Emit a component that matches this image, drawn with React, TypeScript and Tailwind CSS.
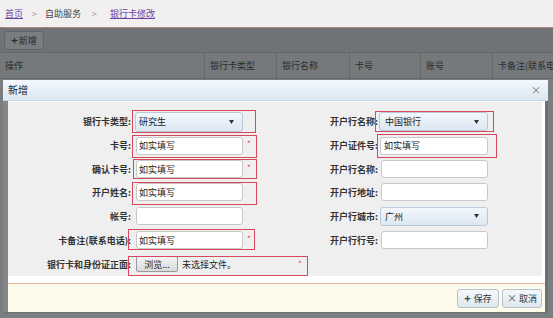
import React from "react";

const F = "font-['Noto_Sans_CJK_SC','Noto_Sans',sans-serif]";

function Arrow() {
  return (
    <svg width="5" height="4" viewBox="0 0 5 4" className="shrink-0">
      <path d="M0 0 L5 0 L2.5 4 Z" fill="#333" />
    </svg>
  );
}

function Star({ className }: { className: string }) {
  return <span className={"text-[#e0404e] text-[8px] leading-none " + className}>*</span>;
}

function Label({ children }: { children: React.ReactNode }) {
  return (
    <div className="flex items-center justify-end text-[9px] font-bold text-[#333] leading-none whitespace-nowrap">
      {children}
    </div>
  );
}

export default function App() {
  return (
    <div className={"w-[553px] h-[318px] overflow-hidden bg-[#7a7e81] " + F}>
      {/* breadcrumb */}
      <div className="h-[28px] bg-[#f1f0ef] border-b border-[#a8887a] flex items-center pl-[5px] text-[9px] leading-none">
        <span className="text-[#6b3fa6] underline">首页</span>
        <span className="text-[#999] ml-[9px] mr-[8px]">&gt;</span>
        <span className="text-[#444]">自助服务</span>
        <span className="text-[#999] ml-[11px] mr-[13px]">&gt;</span>
        <span className="text-[#6b3fa6] underline">银行卡修改</span>
      </div>
      {/* toolbar */}
      <div className="h-[24px] bg-[#6f7376] flex items-center pl-[4px]">
        <div className="h-[19px] w-[40px] bg-[#797d80] border border-[#5f6366] rounded-[3px] flex items-center justify-center gap-[1px] text-[9px] text-[#2a2a2a] leading-none">
          <span className="font-bold text-[11px]">+</span>
          <span>新增</span>
        </div>
      </div>
      {/* table header */}
      <div className="h-[27px] bg-[#75797c] border-y border-[#63676a] flex text-[9px] text-[#2c2c2c] leading-none">
        <div className="w-[205px] border-r border-[#66696c] flex items-center pl-[5px]">操作</div>
        <div className="w-[72px] border-r border-[#66696c] flex items-center pl-[5px]">银行卡类型</div>
        <div className="w-[73px] border-r border-[#66696c] flex items-center pl-[5px]">银行名称</div>
        <div className="w-[71px] border-r border-[#66696c] flex items-center pl-[5px]">卡号</div>
        <div className="w-[72px] border-r border-[#66696c] flex items-center pl-[5px]">账号</div>
        <div className="flex-1 min-w-0 flex items-center pl-[5px] whitespace-nowrap overflow-hidden">卡备注(联系电话)</div>
      </div>
      {/* dialog */}
      <div className="mt-[1px] ml-[3px] w-[545px]">
        <div className="h-[21px] bg-gradient-to-b from-[#f3f8fc] to-[#dce8f3] border-b border-[#c5d6e6] flex items-center justify-between pl-[5px] pr-[7px]">
          <span className="text-[10px] text-[#222] leading-none">新增</span>
          <span className="text-[10px] text-[#777] leading-none">×</span>
        </div>
        <div className="flex">
          <div className="w-[5px] bg-[#83878a]" />
          <div className="w-[537px] bg-white">
            <div className="bg-[#efefef] mt-[1px] mr-[3px] pt-[8px]">
              <div className="grid grid-cols-[123px_169px_78px_1fr] grid-rows-[23px_25px_22px_24px_24px_24px_24px]">
                {/* row 1 */}
                <Label>银行卡类型:</Label>
                <div className="relative flex items-center">
                  <div className="ml-[4px] h-[20px] w-[108px] border border-[#b9c9d9] rounded-[3px] bg-gradient-to-b from-[#f2f7fc] to-[#dce7f2] flex items-center justify-between pl-[3px] pr-[8px] text-[9px] text-[#222] leading-none">
                    <span>研究生</span>
                    <Arrow />
                  </div>
                  <span className="absolute left-[1px] top-[0px] w-[124px] h-[23px] border-[1.5px] border-[#d8485c]" />
                </div>
                <Label>开户行名称:</Label>
                <div className="relative flex items-center">
                  <div className="ml-[1px] h-[19px] w-[109px] border border-[#b9c9d9] rounded-[3px] bg-gradient-to-b from-[#f2f7fc] to-[#dce7f2] flex items-center justify-between pl-[5px] pr-[8px] text-[9px] text-[#222] leading-none">
                    <span>中国银行</span>
                    <Arrow />
                  </div>
                  <span className="absolute left-[-3px] top-[1px] w-[119px] h-[21px] border-[1.5px] border-[#d8485c]" />
                </div>
                {/* row 2 */}
                <Label>卡号:</Label>
                <div className="relative flex items-center">
                  <div className="ml-[5px] h-[18px] w-[107px] border border-[#c8c8c8] rounded-[3px] bg-white flex items-center pl-[2px] text-[9px] text-[#222] leading-none">如实填写</div>
                  <Star className="ml-[4px] -mt-[3px]" />
                  <span className="absolute left-[1px] top-[2px] w-[125px] h-[23px] border-[1.5px] border-[#d8485c]" />
                </div>
                <Label>开户证件号:</Label>
                <div className="relative flex items-center">
                  <div className="ml-[2px] h-[18px] w-[108px] border border-[#c8c8c8] rounded-[3px] bg-white flex items-center pl-[3px] text-[9px] text-[#222] leading-none">如实填写</div>
                  <span className="absolute left-[-1px] top-[1px] w-[120px] h-[24px] border-[1.5px] border-[#d8485c]" />
                </div>
                {/* row 3 */}
                <Label>确认卡号:</Label>
                <div className="relative flex items-center">
                  <div className="ml-[5px] h-[18px] w-[107px] border border-[#c8c8c8] rounded-[3px] bg-white flex items-center pl-[2px] text-[9px] text-[#222] leading-none">如实填写</div>
                  <Star className="ml-[4px] -mt-[3px]" />
                  <span className="absolute left-[2px] top-[1px] w-[124px] h-[20px] border-[1.5px] border-[#d8485c]" />
                </div>
                <Label>开户行名称:</Label>
                <div className="flex items-center">
                  <div className="ml-[3px] h-[18px] w-[107px] border border-[#c8c8c8] rounded-[3px] bg-white" />
                </div>
                {/* row 4 */}
                <Label>开户姓名:</Label>
                <div className="relative flex items-center">
                  <div className="ml-[5px] h-[18px] w-[107px] border border-[#c8c8c8] rounded-[3px] bg-white flex items-center pl-[2px] text-[9px] text-[#222] leading-none">如实填写</div>
                  <span className="absolute left-[1px] top-[2px] w-[125px] h-[23px] border-[1.5px] border-[#d8485c]" />
                </div>
                <Label>开户行地址:</Label>
                <div className="flex items-center">
                  <div className="ml-[3px] h-[18px] w-[107px] border border-[#c8c8c8] rounded-[3px] bg-white" />
                </div>
                {/* row 5 */}
                <Label>帐号:</Label>
                <div className="flex items-center">
                  <div className="ml-[5px] h-[18px] w-[107px] border border-[#c8c8c8] rounded-[3px] bg-white" />
                </div>
                <Label>开户行城市:</Label>
                <div className="flex items-center">
                  <div className="ml-[2px] h-[19px] w-[108px] border border-[#b9c9d9] rounded-[3px] bg-gradient-to-b from-[#f2f7fc] to-[#dce7f2] flex items-center justify-between pl-[4px] pr-[8px] text-[9px] text-[#222] leading-none">
                    <span>广州</span>
                    <Arrow />
                  </div>
                </div>
                {/* row 6 */}
                <Label>卡备注(联系电话):</Label>
                <div className="relative flex items-center">
                  <div className="ml-[5px] h-[18px] w-[107px] border border-[#c8c8c8] rounded-[3px] bg-white flex items-center pl-[2px] text-[9px] text-[#222] leading-none">如实填写</div>
                  <Star className="ml-[4px] -mt-[3px]" />
                  <span className="absolute left-[-3px] top-[1px] w-[127px] h-[21px] border-[1.5px] border-[#d8485c]" />
                </div>
                <Label>开户行行号:</Label>
                <div className="flex items-center">
                  <div className="ml-[3px] h-[18px] w-[107px] border border-[#c8c8c8] rounded-[3px] bg-white" />
                </div>
                {/* row 7 */}
                <Label>银行卡和身份证正面:</Label>
                <div className="relative col-span-2 flex items-start">
                  <div className="ml-[5px] mt-[4px] h-[16px] w-[42px] border border-[#9a9a9a] rounded-[2px] bg-gradient-to-b from-[#f4f4f4] to-[#dadada] flex items-center justify-center text-[9px] text-[#222] leading-none">浏览...</div>
                  <span className="ml-[4px] mt-[8px] text-[9px] text-[#222] leading-none">未选择文件。</span>
                  <Star className="ml-[62px] mt-[8px]" />
                  <span className="absolute left-[-3px] top-[4px] w-[180px] h-[20px] border-[1.5px] border-[#d8485c]" />
                </div>
              </div>
            </div>
            <div className="h-[7px]" />
            <div className="border-t border-[#e9b598] bg-[#fffbea] h-[29px] flex items-center justify-end gap-[3px] pr-[3px]">
              <div className="h-[19px] w-[42px] border border-[#b5c2ce] rounded-[3px] bg-gradient-to-b from-[#f5f8fb] to-[#dfe7ef] flex items-center justify-center gap-[3px] text-[9px] text-[#333] leading-none">
                <span className="font-bold text-[11px] text-[#444]">+</span>
                <span>保存</span>
              </div>
              <div className="h-[19px] w-[40px] border border-[#b5c2ce] rounded-[3px] bg-gradient-to-b from-[#f5f8fb] to-[#dfe7ef] flex items-center justify-center gap-[2px] text-[9px] text-[#333] leading-none">
                <span className="text-[10px] text-[#555]">×</span>
                <span>取消</span>
              </div>
            </div>
          </div>
          <div className="w-[3px] bg-[#6d7174]" />
        </div>
        <div className="h-[1px] bg-[#6d7174]" />
      </div>
    </div>
  );
}
